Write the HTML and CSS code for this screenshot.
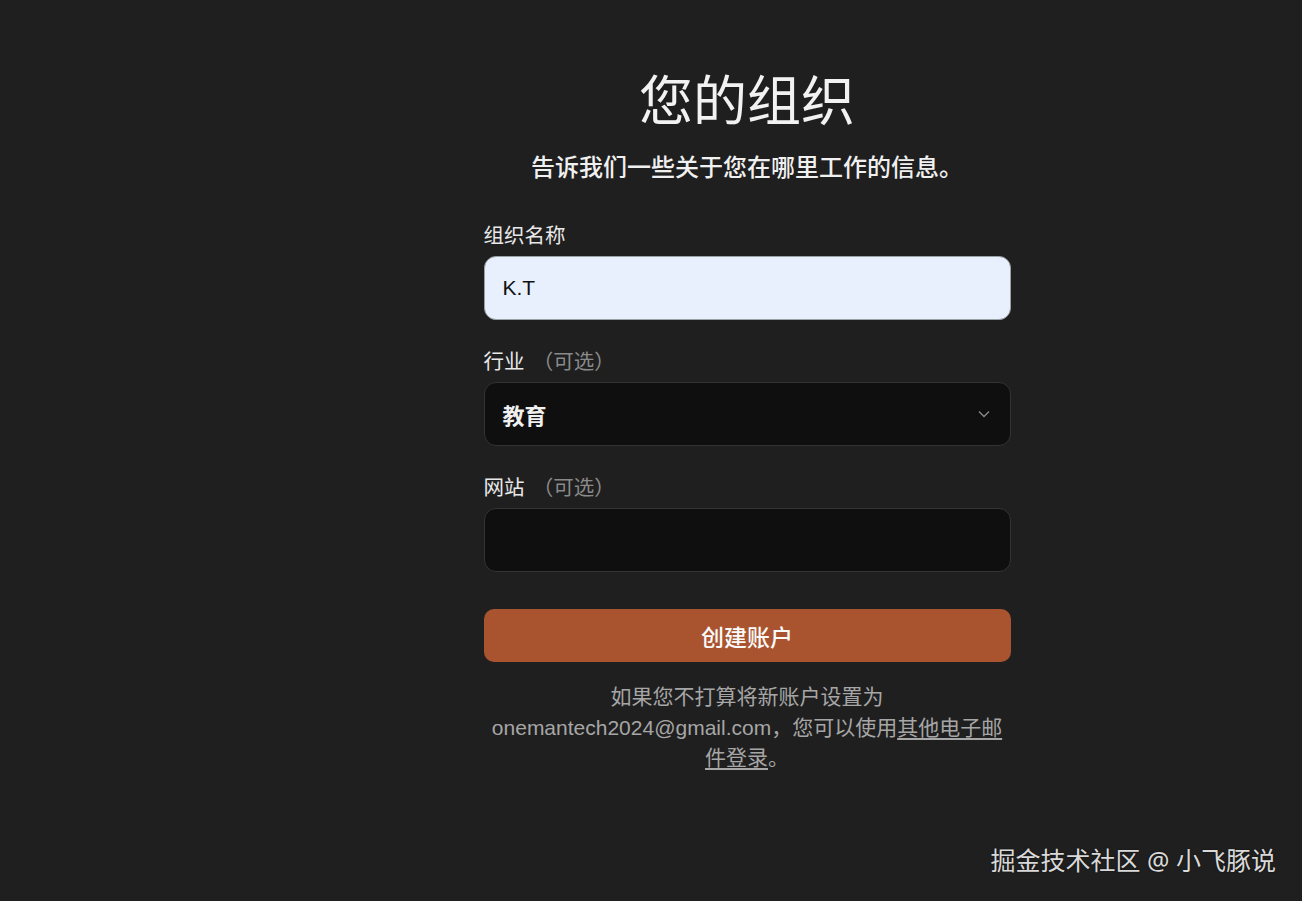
FILE: index.html
```html
<!DOCTYPE html>
<html lang="zh-CN">
<head>
<meta charset="utf-8">
<title>您的组织</title>
<link rel="stylesheet" href="styles.css">
</head>
<body>
<main class="page">
  <section class="card">
    <h1 class="title">您的组织</h1>
    <p class="subtitle">告诉我们一些关于您在哪里工作的信息。</p>
    <form class="form">
      <div class="field">
        <label class="label">组织名称</label>
        <div class="input input-filled">K.T</div>
      </div>
      <div class="field">
        <label class="label">行业 <span class="opt">（可选）</span></label>
        <div class="input input-dark select">
          <span class="select-value">教育</span>
          <svg class="chev" width="12" height="8" viewBox="0 0 12 8"><path d="M1 1.5 L6 6.5 L11 1.5" fill="none" stroke="#8a8a8a" stroke-width="1.3"/></svg>
        </div>
      </div>
      <div class="field">
        <label class="label">网站 <span class="opt">（可选）</span></label>
        <div class="input input-dark"></div>
      </div>
      <button type="button" class="btn">创建账户</button>
    </form>
    <p class="note">如果您不打算将新账户设置为 onemantech2024@gmail.com，您可以使用<a class="link">其他电子邮件登录</a>。</p>
  </section>
  <div class="watermark">掘金技术社区 @ 小飞豚说</div>
</main>
</body>
</html>
```

FILE: styles.css
```css
html, body {
  margin: 0;
  padding: 0;
  background: #1f1f1f;
}
body {
  font-family: "Noto Sans", "Noto Sans CJK SC", sans-serif;
  color: #ececec;
}
.page {
  position: relative;
  width: 1302px;
  height: 901px;
  display: flex;
  justify-content: center;
  box-sizing: border-box;
  padding-top: 62px;
  padding-left: 192px;
}
.card {
  width: 527px;
  display: flex;
  flex-direction: column;
  align-items: stretch;
}
.title {
  margin: 0;
  text-align: center;
  font-size: 54px;
  font-weight: 400;
  line-height: 76px;
  color: #f2f2f2;
}
.subtitle {
  margin: 13px 0 0;
  text-align: center;
  font-size: 24px;
  font-weight: 500;
  line-height: 32px;
  color: #f0f0f0;
}
.form {
  margin-top: 38px;
  display: flex;
  flex-direction: column;
}
.field {
  display: flex;
  flex-direction: column;
  margin-bottom: 27px;
}
.label {
  font-size: 20.5px;
  line-height: 28px;
  color: #e8e8e8;
  margin-bottom: 7px;
}
.opt {
  color: #8a8a8a;
  margin-left: 3px;
}
.input {
  height: 64px;
  box-sizing: border-box;
  border-radius: 12px;
  display: flex;
  align-items: center;
  padding: 0 18px;
  font-size: 21px;
}
.input-filled {
  background: #e8f0fe;
  border: 1px solid #9aa0a6;
  color: #111;
  font-family: "Liberation Sans", "Noto Sans CJK SC", sans-serif;
}
.input-dark {
  background: #0f0f0f;
  border: 1px solid #333;
  color: #f0f0f0;
}
.select {
  justify-content: space-between;
}
.select-value {
  font-size: 22px;
  font-weight: 600;
}
.chev {
  margin-right: 2px;
}
.btn {
  margin-top: 10px;
  height: 53px;
  border: none;
  border-radius: 10px;
  background: #a9532f;
  color: #fafafa;
  font-family: "Noto Sans", "Noto Sans CJK SC", sans-serif;
  font-size: 23px;
  font-weight: 500;
}
.note {
  margin: 20px 0 0;
  text-align: center;
  font-family: "Liberation Sans", "Noto Sans CJK SC", sans-serif;
  font-size: 21px;
  line-height: 30.5px;
  color: #a6a6a6;
}
.link {
  color: #a6a6a6;
  text-decoration: underline;
  text-underline-offset: 3px;
}
.watermark {
  position: absolute;
  right: 26px;
  bottom: 24px;
  font-size: 25px;
  color: #d9d9d9;
  text-shadow: 0 0 2px rgba(0,0,0,0.6);
}
```
